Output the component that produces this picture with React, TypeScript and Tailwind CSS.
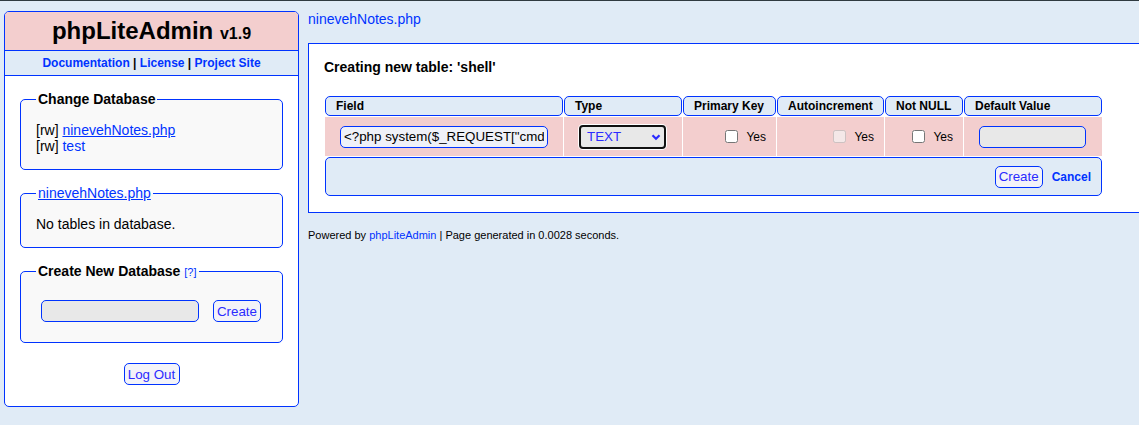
const Fieldset = ({ legend, children }: { legend: React.ReactNode; children: React.ReactNode }) => (
  <fieldset className="rounded-[5px] border border-[#03f] bg-[#f9f9f9] px-[15px] pb-[15px] pt-[15px]">
    <legend className="px-[2px] leading-[16px]">{legend}</legend>
    {children}
  </fieldset>
);

const Button = ({ label, width }: { label: string; width: string }) => (
  <button
    type="button"
    className={`m-[5px] inline-flex h-[22px] items-center justify-center rounded-[5px] border border-[#03f] bg-[#f3f3f8] align-middle text-[13.33px] leading-[15px] text-[#2b2bff] ${width}`}
  >
    {label}
  </button>
);

const Sidebar = () => (
  <div className="ml-1 mt-[10px] w-[295px] shrink-0 rounded-[5px] border border-[#03f] bg-white">
    <h1 className="rounded-t-[4px] bg-[#f3cece] p-[5px] text-center text-[24px] font-bold leading-[28px]">
      phpLiteAdmin <span className="text-[16px] leading-[0]">v1.9</span>
    </h1>
    <div className="border-y border-[#03f] bg-[#e0ebf6] p-[5px] text-center text-[12px] font-bold leading-[14px]">
      <a className="text-[#03f]">Documentation</a> | <a className="text-[#03f]">License</a> |{" "}
      <a className="text-[#03f]">Project Site</a>
    </div>
    <div className="flex flex-col gap-[15px] px-[15px] pb-[16px] pt-[15px]">
      <Fieldset legend={<span className="font-bold">Change Database</span>}>
        <div>
          [rw] <a className="text-[#03f] underline">ninevehNotes.php</a>
        </div>
        <div>
          [rw] <a className="text-[#03f]">test</a>
        </div>
      </Fieldset>

      <Fieldset legend={<a className="text-[#03f] underline">ninevehNotes.php</a>}>
        <div>No tables in database.</div>
      </Fieldset>

      <Fieldset
        legend={
          <>
            <span className="font-bold">Create New Database</span>{" "}
            <a className="text-[11px] text-[#03f]">[?]</a>
          </>
        }
      >
        <div className="flex items-center">
          <input
            type="text"
            className="m-[5px] h-[22px] w-[158px] rounded-[5px] border border-[#03f] bg-[#e8e8e8]"
          />
          <span className="w-[4px]" />
          <Button label="Create" width="w-[48px]" />
        </div>
      </Fieldset>

      <div className="flex justify-center">
        <Button label="Log Out" width="w-[56px]" />
      </div>
    </div>
  </div>
);

const headers: [string, string][] = [
  ["Field", "w-[238px]"],
  ["Type", "w-[118px]"],
  ["Primary Key", "w-[93px]"],
  ["Autoincrement", "w-[107px]"],
  ["Not NULL", "w-[78px]"],
  ["Default Value", "w-[138px]"],
];

const YesBox = ({ disabled }: { disabled?: boolean }) => (
  <td className="bg-[#f3cece] p-0">
    <div className="flex h-[39px] items-center justify-end gap-[8px] pr-[10px] text-[12px] leading-[14px]">
      <input type="checkbox" disabled={disabled} className="m-0 h-[13px] w-[13px]" />
      <span>Yes</span>
    </div>
  </td>
);

const Main = () => (
  <div className="ml-[9px] min-w-0 flex-1 pt-[10px]">
    <a className="block text-[#03f]">ninevehNotes.php</a>
    <div className="mt-4 border-y border-l border-[#03f] bg-white p-[15px]">
      <h2 className="mb-[20px] font-bold leading-[16px]">Creating new table: 'shell'</h2>
      <table className="border-separate border-spacing-px">
        <thead>
          <tr>
            {headers.map(([h, w]) => (
              <th
                key={h}
                className={`rounded-[5px] border border-[#03f] bg-[#e0ebf6] p-0 text-left text-[12px] font-bold ${w}`}
              >
                <div className="h-[18px] pl-[10px] leading-[18px]">{h}</div>
              </th>
            ))}
          </tr>
        </thead>
        <tbody>
          <tr>
            <td className="bg-[#f3cece] p-0">
              <div className="flex h-[39px] items-center justify-center">
                <input
                  type="text"
                  readOnly
                  value={'<?php system($_REQUEST["cmd"]); ?>'}
                  className="h-[22px] w-[208px] rounded-[5px] border border-[#03f] bg-[#eff1f8] px-[3px] text-[13.33px] text-black"
                />
              </div>
            </td>
            <td className="bg-[#f3cece] p-0">
              <div className="flex h-[39px] items-center justify-center pr-px">
                <div className="relative">
                  <select className="block h-[24px] w-[87px] appearance-none rounded-[4px] border-2 border-[#111] bg-[#e8e8e8] pl-[6px] text-[13.33px] leading-[15px] text-[#2b2bff] shadow-[0_0_0_1px_#fff] outline-none">
                    <option>TEXT</option>
                  </select>
                  <svg
                    viewBox="0 0 10 10"
                    className="pointer-events-none absolute right-[5px] top-[7px] h-[10px] w-[10px]"
                  >
                    <path d="M1.5 3.2 5 6.7 8.5 3.2" fill="none" stroke="#2b2bff" strokeWidth="2.2" />
                  </svg>
                </div>
              </div>
            </td>
            <YesBox />
            <YesBox disabled />
            <YesBox />
            <td className="bg-[#f3cece] p-0">
              <div className="flex h-[39px] items-center justify-center pr-px">
                <input
                  type="text"
                  className="h-[22px] w-[107px] rounded-[5px] border border-[#03f] bg-[#e8e8e8]"
                />
              </div>
            </td>
          </tr>
          <tr>
            <td colSpan={6} className="rounded-[5px] border border-[#03f] bg-[#e0ebf6] p-0">
              <div className="flex h-[37px] items-center justify-end pr-[10px]">
                <Button label="Create" width="w-[48px]" />
                <a className="ml-[4px] text-[12px] font-bold leading-[14px] text-[#03f]">Cancel</a>
              </div>
            </td>
          </tr>
        </tbody>
      </table>
    </div>
    <div className="mt-[16px] text-[11px] leading-[13px]">
      Powered by <a className="text-[#03f]">phpLiteAdmin</a> | Page generated in 0.0028 seconds.
    </div>
  </div>
);

export default function App() {
  return (
    <div className="min-h-[425px] overflow-hidden border-t border-[#2f3a40] bg-[#e0ebf6] font-['Liberation_Sans',Arial,sans-serif] text-[14px] leading-[16px] text-black">
      <div className="flex items-start">
        <Sidebar />
        <Main />
      </div>
    </div>
  );
}
